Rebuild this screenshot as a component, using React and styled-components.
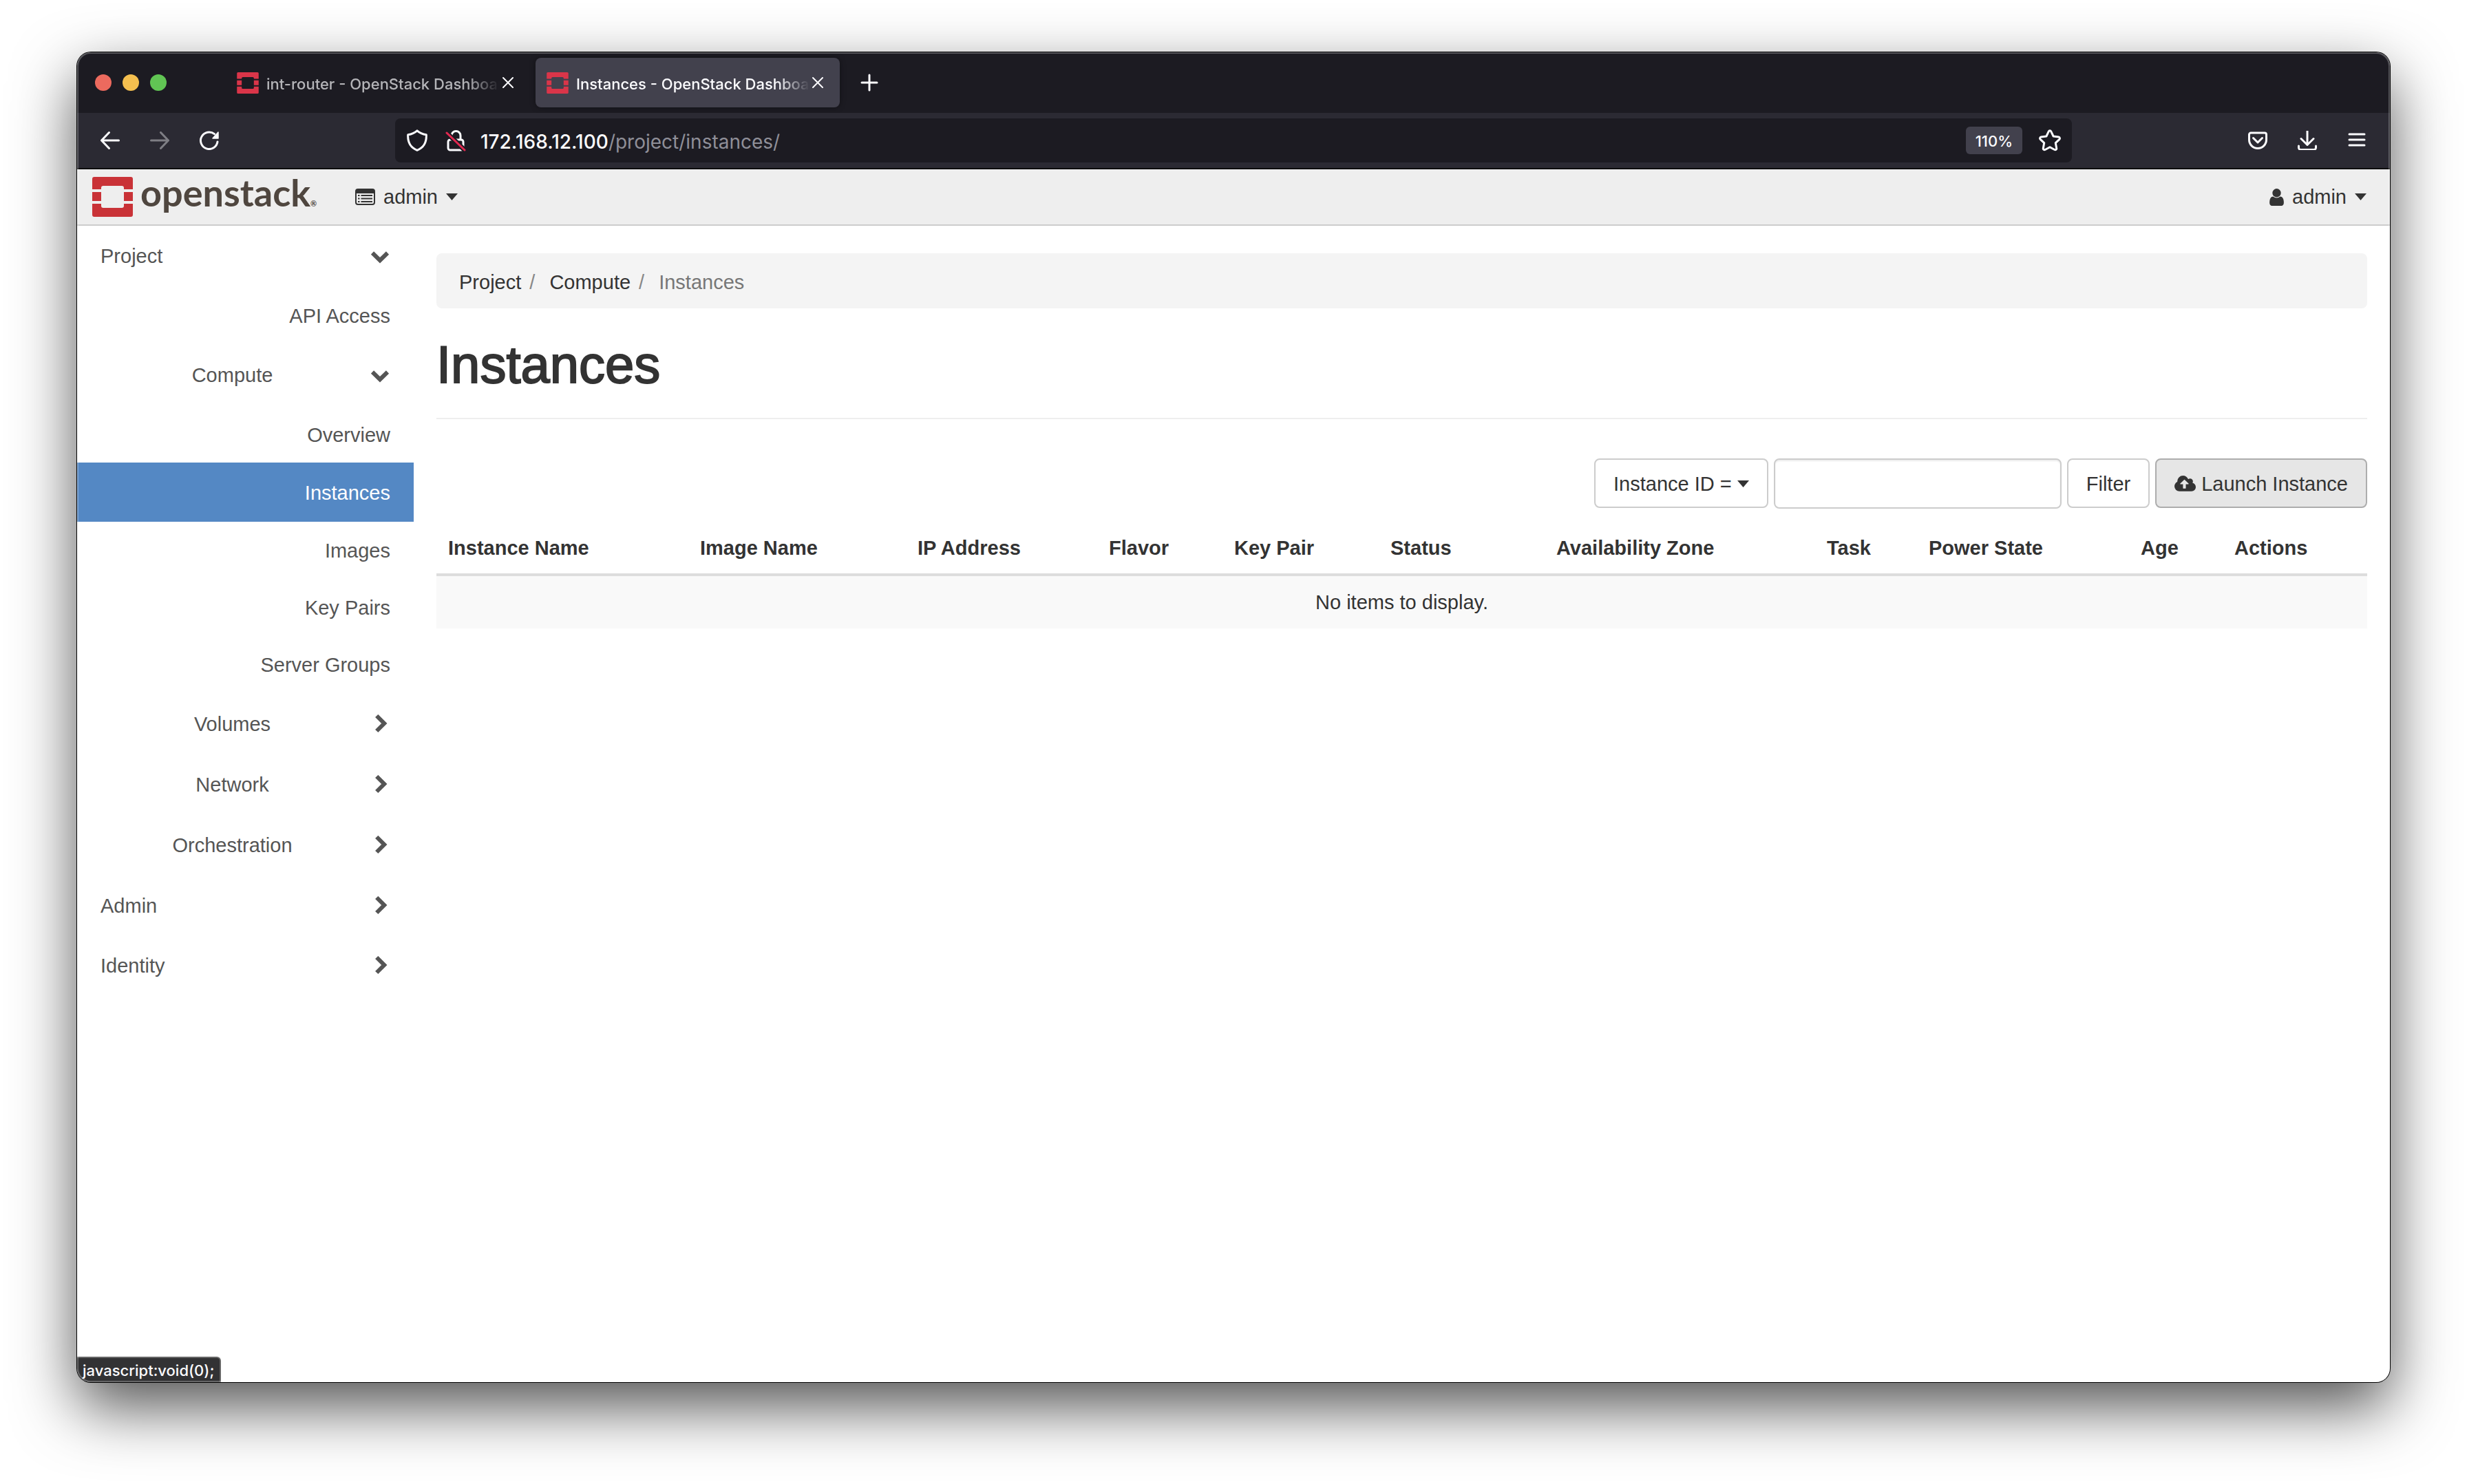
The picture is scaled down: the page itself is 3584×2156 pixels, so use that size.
import React from "react";
import styled, { createGlobalStyle, css } from "styled-components";

const GlobalStyle = createGlobalStyle`
  *, *::before, *::after { box-sizing: border-box; }
  body { margin: 0; background: #fff; }
  button { font: inherit; color: inherit; cursor: pointer; }
  svg { display: block; flex: none; }
  ul, ol { list-style: none; margin: 0; padding: 0; }
  a { color: inherit; text-decoration: none; }
`;

const uiFont = `Inter, Roboto, sans-serif`;
const pageFont = `"Liberation Sans", Arial, sans-serif`;

/* ---------- window ---------- */

const Desktop = styled.div`
  display: flex;
  min-height: 100vh;
  padding: 76px 112px 148px;
`;

const BrowserWindow = styled.div`
  position: relative;
  flex: 1;
  min-width: 0;
  display: flex;
  flex-direction: column;
  border-radius: 20px;
  overflow: hidden;
  background: #fff;
  box-shadow: 0 0 0 1px #000, 0 36px 90px rgba(0, 0, 0, 0.68);

  &::after {
    content: "";
    position: absolute;
    inset: 0;
    border-radius: 20px;
    box-shadow: inset 0 0 0 2px rgba(255, 255, 255, 0.26);
    pointer-events: none;
  }
`;

const TabStrip = styled.div`
  display: flex;
  align-items: center;
  height: 88px;
  padding-left: 26px;
  background: #1c1b22;
  font-family: ${uiFont};
`;

const TrafficLights = styled.div`
  display: flex;
  gap: 16px;
  margin-right: 86px;
`;

const Light = styled.button`
  width: 24px;
  height: 24px;
  padding: 0;
  border: 0;
  border-radius: 50%;
  background: ${(p) => p.$color};
`;

const Tabs = styled.div`
  display: flex;
  gap: 8px;
  margin-right: 27px;
`;

const Tab = styled.div`
  display: flex;
  align-items: center;
  width: 442px;
  height: 72px;
  padding: 0 20px 0 16px;
  border-radius: 8px;
  color: #b4b4b8;
  ${(p) =>
    p.$active &&
    css`
      color: #fbfbfe;
      background: #42414d;
      box-shadow: 0 0 8px rgba(0, 0, 0, 0.4);
    `}
`;

const TabTitle = styled.span`
  flex: 1;
  min-width: 0;
  margin: 4px 0 0 11px;
  font-size: 22px;
  font-weight: 500;
  line-height: 32px;
  white-space: nowrap;
  overflow: hidden;
  mask-image: linear-gradient(to left, transparent, #000 48px);
`;

const IconButton = styled.button`
  display: flex;
  align-items: center;
  justify-content: center;
  flex: none;
  width: ${(p) => p.$size || 28}px;
  height: ${(p) => p.$size || 28}px;
  padding: 0;
  border: 0;
  background: none;
  color: #fbfbfe;
  opacity: ${(p) => (p.disabled ? 0.4 : 1)};
`;

const Toolbar = styled.div`
  display: flex;
  align-items: center;
  height: 82px;
  padding: 0 34px;
  background: #2b2a33;
  border-bottom: 2px solid #0c0c0d;
  font-family: ${uiFont};
`;

const ToolGroup = styled.div`
  display: flex;
  align-items: center;
  gap: ${(p) => (p.$tight ? 24 : 44)}px;
`;

const UrlBar = styled.div`
  flex: 1;
  min-width: 0;
  display: flex;
  align-items: center;
  gap: 20px;
  height: 64px;
  margin: 0 256px;
  padding: 0 16px;
  border-radius: 8px;
  background: #1c1b22;
`;

const Address = styled.div`
  flex: 1;
  min-width: 0;
  padding-top: 3px;
  font-size: 28px;
  line-height: 40px;
  white-space: nowrap;
  overflow: hidden;
  color: #8f8f98;
  outline: none;
`;

const Host = styled.span`
  color: #fbfbfe;
  font-weight: 500;
`;

const ZoomBadge = styled.button`
  height: 40px;
  padding: 0 14px;
  border: 0;
  border-radius: 6px;
  background: #42414d;
  color: #fbfbfe;
  font-size: 22px;
  font-weight: 500;
  line-height: 42px;
`;

const StatusBubble = styled.div`
  position: absolute;
  left: 0;
  bottom: 0;
  padding: 1px 8px 0;
  border-top: 2px solid #666;
  border-right: 2px solid #666;
  border-top-right-radius: 6px;
  background: #323234;
  color: #fbfbfe;
  font-family: ${uiFont};
  font-size: 22px;
  font-weight: 500;
  line-height: 34px;
`;

/* ---------- dashboard ---------- */

const Navbar = styled.header`
  display: flex;
  align-items: center;
  justify-content: space-between;
  height: 82px;
  padding: 0 34px 0 22px;
  background: #eee;
  border-bottom: 2px solid #ccc;
  font-family: ${pageFont};
  font-size: 29px;
  color: #333;
`;

const NavbarLeft = styled.div`
  display: flex;
  align-items: center;
`;

const Brand = styled.a`
  display: flex;
  align-items: center;
  gap: 11px;
  width: 382px;
`;

const Wordmark = styled.span`
  display: flex;
  align-items: baseline;
  padding-top: 4px;
  color: #4f463f;
  font-family: Lato, "Open Sans", sans-serif;
  font-size: 54px;
  font-weight: 700;
  line-height: 64px;
`;

const Registered = styled.span`
  font-size: 11px;
`;

const MenuButton = styled.button`
  display: flex;
  align-items: center;
  gap: 12px;
  padding: 0;
  border: 0;
  background: none;
  line-height: 41px;
`;

const Body = styled.div`
  flex: 1;
  display: flex;
  font-family: ${pageFont};
  font-size: 29px;
  line-height: 41px;
  color: #333;
`;

const Sidebar = styled.nav`
  flex: none;
  width: 489px;
  color: #555;
`;

const PanelToggle = styled.button`
  display: flex;
  align-items: center;
  width: 100%;
  height: ${(p) => (p.$nested ? 88 : 87)}px;
  padding: 0 34px;
  border: 0;
  background: none;
  text-align: left;
  ${(p) =>
    p.$nested &&
    css`
      padding-left: 24px;
      text-align: center;
    `}
`;

const ToggleLabel = styled.span`
  flex: 1;
  padding-top: 1px;
`;

const PanelItems = styled.ul`
  padding: 1px 0;
`;

const PanelLink = styled.a`
  display: flex;
  align-items: center;
  justify-content: flex-end;
  height: ${(p) => (p.$tall ? 86 : 83)}px;
  padding: 2px 34px 0;
  ${(p) =>
    p.$active &&
    css`
      height: 86px;
      margin-top: -1px;
      background: #5488c4;
      color: #fff;
    `}
`;

const Main = styled.main`
  flex: 1;
  min-width: 0;
  padding: 40px 33px;
`;

const Breadcrumb = styled.ol`
  display: flex;
  height: 80px;
  padding: 0 33px;
  border-radius: 8px;
  background: #f4f4f4;
  line-height: 84px;
`;

const Crumb = styled.li`
  color: ${(p) => (p.$current ? "#777" : "#333")};

  &:not(:first-child)::before {
    content: "/\\00a0";
    padding: 0 13px 0 12px;
    color: #888;
  }
`;

const PageTitle = styled.h1`
  margin: 42px 0 57px;
  padding-bottom: 37px;
  border-bottom: 2px solid #eee;
  font-size: 76px;
  font-weight: 500;
  line-height: 80px;
  -webkit-text-stroke: 2px #333;
`;

const TableActions = styled.div`
  display: flex;
  align-items: flex-start;
  justify-content: flex-end;
  gap: 8px;
  margin-bottom: 18px;
`;

const Button = styled.button`
  display: flex;
  align-items: center;
  gap: 8px;
  height: 72px;
  padding: 2px 26px 0;
  border: 2px solid ${(p) => (p.$pressed ? "#adadad" : "#ccc")};
  border-radius: 8px;
  background: ${(p) => (p.$pressed ? "#e6e6e6" : "#fff")};
  white-space: nowrap;
`;

const FilterInput = styled.input`
  width: 418px;
  height: 73px;
  padding: 0 26px;
  border: 2px solid #ccc;
  border-radius: 8px;
  box-shadow: inset 0 2px 2px rgba(0, 0, 0, 0.075);
  font: inherit;
  color: #555;
`;

const DataTable = styled.table`
  width: 100%;
  table-layout: fixed;
  border-collapse: separate;
  border-spacing: 0;
`;

const HeadCell = styled.th`
  width: ${(p) => p.$width}px;
  padding: 19px 0 16px 17px;
  border-bottom: 4px solid #ddd;
  text-align: left;
  font-weight: 700;
  white-space: nowrap;
`;

const EmptyCell = styled.td`
  padding: 18px 17px 17px;
  background: #f9f9f9;
  text-align: center;
`;

/* ---------- icons ---------- */

const OpenStackMark = ({ width, height, color }) => (
  <svg width={width} height={height} viewBox="0 0 59 58" fill={color} aria-hidden="true">
    <path d="M3 0H56a3 3 0 0 1 3 3V18H46V16a3 3 0 0 0-3-3H16a3 3 0 0 0-3 3v2H0V3a3 3 0 0 1 3-3z" />
    <path d="M0 22h13v13H0zM46 22h13v13H46z" />
    <path d="M3 58H56a3 3 0 0 0 3-3V39H46v3a3 3 0 0 1-3 3H16a3 3 0 0 1-3-3v-3H0V55a3 3 0 0 0 3 3z" />
  </svg>
);

const Stroke = ({ size = 28, box = size, width = 3, children }) => (
  <svg
    width={size}
    height={size}
    viewBox={`0 0 ${box} ${box}`}
    fill="none"
    stroke="currentColor"
    strokeWidth={width}
    strokeLinecap="round"
    strokeLinejoin="round"
    aria-hidden="true"
  >
    {children}
  </svg>
);

const CloseIcon = () => (
  <Stroke size={16} width={2}><path d="M1 1l14 14M15 1L1 15" /></Stroke>
);
const PlusIcon = () => (
  <Stroke size={26}><path d="M13 2v22M2 13h22" /></Stroke>
);
const BackIcon = () => (
  <Stroke><path d="M26.500 14H2M12.500 2.500L1.500 14l11 11.500" /></Stroke>
);
const ForwardIcon = () => (
  <Stroke><path d="M1.500 14H26M15.500 2.500l11 11.500-11 11.500" /></Stroke>
);
const ReloadIcon = () => (
  <Stroke>
    <path d="M26 16A12.300 12.300 0 1 1 21.500 4.600" />
    <path d="M27 2v9h-8z" fill="currentColor" strokeWidth="1.500" />
  </Stroke>
);
const ShieldIcon = () => (
  <Stroke size={32}>
    <path d="M16 1.800c4 3.600 8.500 5.200 13.300 6C29.800 17 27 26 16 30.300 5 26 2.200 17 2.700 7.800 7.500 7 12 5.400 16 1.800z" />
  </Stroke>
);
const LockIcon = () => (
  <Stroke size={32}>
    <path d="M10 14V9a6.500 6.500 0 0 1 13 0v5" />
    <rect x="5" y="15" width="22" height="15" rx="3" />
    <path d="M3 5l26 25" stroke="#1c1b22" strokeWidth="7" />
    <path d="M3 5l26 25" stroke="#e22850" />
  </Stroke>
);
const StarIcon = () => (
  <Stroke size={32}>
    <path d="M14.300 2.900a1.900 1.900 0 0 1 3.400 0l3.400 7.100 7.700 1.100a1.900 1.900 0 0 1 1.100 3.200l-5.600 5.400 1.400 7.800a1.900 1.900 0 0 1-2.800 2L16 25.800l-6.900 3.700a1.900 1.900 0 0 1-2.800-2l1.400-7.800-5.600-5.400a1.900 1.900 0 0 1 1.100-3.200L10.900 10z" />
  </Stroke>
);
const PocketIcon = () => (
  <Stroke>
    <path d="M4 3h20a2.500 2.500 0 0 1 2.500 2.500V13a12.500 12.500 0 0 1-25 0V5.500A2.500 2.500 0 0 1 4 3z" />
    <path d="M7.500 10.500L14 17l6.500-6.500" />
  </Stroke>
);
const DownloadIcon = () => (
  <Stroke>
    <path d="M14 0v20M5 11.500l9 9 9-9" />
    <path d="M1.500 22v2.500A3 3 0 0 0 4.500 27.500h19a3 3 0 0 0 3-3V22" />
  </Stroke>
);
const HamburgerIcon = () => (
  <Stroke><path d="M3 5h22M3 13h22M3 21h22" /></Stroke>
);

const ListIcon = () => (
  <svg width="29" height="24" viewBox="0 0 29 24" aria-hidden="true">
    <rect x="1" y="1" width="27" height="22" rx="3" fill="none" stroke="#333" strokeWidth="2" />
    <path d="M1 7V4a3 3 0 0 1 3-3h21a3 3 0 0 1 3 3v3z" fill="#333" />
    <path d="M4 10h2.500M4 14.500h2.500M4 19h2.500M8.500 10H25M8.500 14.500H25M8.500 19H25" stroke="#333" strokeWidth="2" />
  </svg>
);
const UserIcon = () => (
  <svg width="21" height="29" viewBox="0 0 1280 1792" fill="#333" aria-hidden="true">
    <path d="M1280 1399q0 109-62.500 187t-150.500 78h-854q-88 0-150.500-78t-62.500-187q0-85 8.500-160.500t31.500-152 58.500-131 94-89 134.500-34.500q131 128 313 128t313-128q76 0 134.500 34.500t94 89 58.500 131 31.500 152 8.500 160.500zm-256-887q0 159-112.500 271.500t-271.500 112.500-271.500-112.500-112.500-271.500 112.500-271.500 271.500-112.500 271.500 112.500 112.500 271.500z" />
  </svg>
);
const CloudUploadIcon = () => (
  <svg width="31" height="29" viewBox="-64 0 1920 1792" fill="#333" aria-hidden="true">
    <path d="M1216 864q0-14-9-23l-352-352q-9-9-23-9t-23 9l-351 351q-10 12-10 24 0 14 9 23t23 9h224v352q0 13 9.500 22.500t22.500 9.500h192q13 0 22.500-9.500t9.500-22.500v-352h224q13 0 22.500-9.500t9.500-22.500zm640 288q0 159-112.500 271.500t-271.500 112.500h-1088q-185 0-316.500-131.500t-131.500-316.500q0-130 70-240t188-165q-2-30-2-43 0-212 150-362t362-150q156 0 285.500 87t188.500 231q71-62 166-62 106 0 181 75t75 181q0 76-41 138 130 31 213.500 135.500t83.500 238.500z" />
  </svg>
);
const Caret = () => (
  <svg width="17" height="10" viewBox="0 0 17 10" fill="#333" aria-hidden="true">
    <path d="M0 0h17L8.500 10z" />
  </svg>
);
const Chevron = ({ open }) => (
  <svg width="28" height="28" viewBox="0 0 28 28" fill="none" stroke="#555" strokeWidth="6" aria-hidden="true">
    <path d={open ? "M2 9.500L13 20.200 24 9.500" : "M8.200 2L19.200 13 8.200 24"} />
  </svg>
);

/* ---------- data ---------- */

const tabs = [
  { title: "int-router - OpenStack Dashboard" },
  { title: "Instances - OpenStack Dashboard", active: true },
];
const computeItems = ["Overview", "Instances", "Images", "Key Pairs", "Server Groups"];
const columns = [
  ["Instance Name", 366],
  ["Image Name", 316],
  ["IP Address", 278],
  ["Flavor", 182],
  ["Key Pair", 227],
  ["Status", 241],
  ["Availability Zone", 393],
  ["Task", 148],
  ["Power State", 308],
  ["Age", 136],
  ["Actions", 210],
];

const Toggle = ({ label, open, nested }) => (
  <PanelToggle $nested={nested} aria-expanded={!!open}>
    <ToggleLabel>{label}</ToggleLabel>
    <Chevron open={open} />
  </PanelToggle>
);

export default function App() {
  return (
    <Desktop>
      <GlobalStyle />
      <BrowserWindow>
        <TabStrip>
          <TrafficLights>
            <Light $color="#ec6a5e" aria-label="Close window" />
            <Light $color="#f4bf4f" aria-label="Minimize window" />
            <Light $color="#61c554" aria-label="Zoom window" />
          </TrafficLights>
          <Tabs>
            {tabs.map((tab) => (
              <Tab key={tab.title} $active={tab.active}>
                <OpenStackMark width={32} height={31} color="#da3549" />
                <TabTitle>{tab.title}</TabTitle>
                <IconButton $size={24} aria-label="Close tab"><CloseIcon /></IconButton>
              </Tab>
            ))}
          </Tabs>
          <IconButton $size={32} aria-label="New tab"><PlusIcon /></IconButton>
        </TabStrip>

        <Toolbar>
          <ToolGroup>
            <IconButton aria-label="Back"><BackIcon /></IconButton>
            <IconButton aria-label="Forward" disabled><ForwardIcon /></IconButton>
            <IconButton aria-label="Reload"><ReloadIcon /></IconButton>
          </ToolGroup>
          <UrlBar>
            <ToolGroup $tight>
              <IconButton $size={32} aria-label="Tracking protection"><ShieldIcon /></IconButton>
              <IconButton $size={32} aria-label="Connection not secure"><LockIcon /></IconButton>
            </ToolGroup>
            <Address role="textbox" aria-label="Address" contentEditable suppressContentEditableWarning spellCheck={false}>
              <Host>172.168.12.100</Host>/project/instances/
            </Address>
            <ToolGroup $tight>
              <ZoomBadge>110%</ZoomBadge>
              <IconButton $size={32} aria-label="Bookmark"><StarIcon /></IconButton>
            </ToolGroup>
          </UrlBar>
          <ToolGroup>
            <IconButton aria-label="Save to Pocket"><PocketIcon /></IconButton>
            <IconButton aria-label="Downloads"><DownloadIcon /></IconButton>
            <IconButton aria-label="Application menu"><HamburgerIcon /></IconButton>
          </ToolGroup>
        </Toolbar>

        <Navbar>
          <NavbarLeft>
            <Brand href="#">
              <OpenStackMark width={59} height={58} color="#c93237" />
              <Wordmark>openstack<Registered>®</Registered></Wordmark>
            </Brand>
            <MenuButton><ListIcon />admin<Caret /></MenuButton>
          </NavbarLeft>
          <MenuButton><UserIcon />admin<Caret /></MenuButton>
        </Navbar>

        <Body>
          <Sidebar>
            <Toggle label="Project" open />
            <PanelLink href="#" $tall>API Access</PanelLink>
            <Toggle label="Compute" open nested />
            <PanelItems>
              {computeItems.map((item) => (
                <li key={item}>
                  <PanelLink href="#" $active={item === "Instances"}>{item}</PanelLink>
                </li>
              ))}
            </PanelItems>
            <Toggle label="Volumes" nested />
            <Toggle label="Network" nested />
            <Toggle label="Orchestration" nested />
            <Toggle label="Admin" />
            <Toggle label="Identity" />
          </Sidebar>

          <Main>
            <Breadcrumb>
              <Crumb><a href="#">Project</a></Crumb>
              <Crumb><a href="#">Compute</a></Crumb>
              <Crumb $current>Instances</Crumb>
            </Breadcrumb>
            <PageTitle>Instances</PageTitle>
            <TableActions>
              <Button>Instance ID =<Caret /></Button>
              <FilterInput type="text" aria-label="Filter value" />
              <Button>Filter</Button>
              <Button $pressed><CloudUploadIcon />Launch Instance</Button>
            </TableActions>
            <DataTable>
              <thead>
                <tr>
                  {columns.map(([name, width]) => (
                    <HeadCell key={name} $width={width} scope="col">{name}</HeadCell>
                  ))}
                </tr>
              </thead>
              <tbody>
                <tr>
                  <EmptyCell colSpan={columns.length}>No items to display.</EmptyCell>
                </tr>
              </tbody>
            </DataTable>
          </Main>
        </Body>
        <StatusBubble>javascript:void(0);</StatusBubble>
      </BrowserWindow>
    </Desktop>
  );
}
